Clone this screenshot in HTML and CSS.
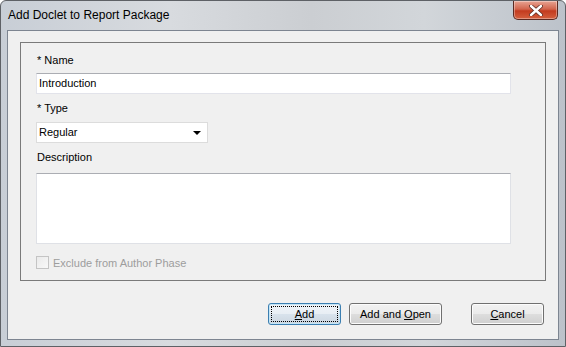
FILE: index.html
```html
<!DOCTYPE html>
<html lang="en">
<head>
    <meta charset="UTF-8">
    <title>Add Doclet to Report Package</title>
    <link rel="stylesheet" href="styles.css">
</head>
<body>

    <!-- Dialog window -->
    <div class="window">
        <div class="titlebar">
            <span class="title">Add Doclet to Report Package</span>
            <div class="close-btn">
                <svg width="14" height="11" viewBox="0 0 14 11">
                    <path d="M2 1 L12 10 M12 1 L2 10" stroke="#5a2a20" stroke-width="4" stroke-linecap="round"/>
                    <path d="M2 1 L12 10 M12 1 L2 10" stroke="#ffffff" stroke-width="2.4" stroke-linecap="round"/>
                </svg>
            </div>
        </div>

        <div class="client">
            <!-- Group box -->
            <div class="group">
                <label class="field-label">* Name</label>
                <div class="textbox name-box">Introduction</div>

                <label class="field-label">* Type</label>
                <div class="textbox type-box">
                    <span>Regular</span>
                    <span class="arrow"></span>
                </div>

                <label class="field-label desc-label">Description</label>
                <div class="textbox desc-box"></div>

                <div class="check-row">
                    <span class="checkbox"></span>
                    <span class="check-label">Exclude from Author Phase</span>
                </div>
            </div>

            <!-- Buttons -->
            <div class="buttons">
                <div class="btn btn-add focused"><span class="focus-rect"><span><u>A</u>dd</span></span></div>
                <div class="btn btn-open"><span>Add and <u>O</u>pen</span></div>
                <div class="btn btn-cancel"><span><u>C</u>ancel</span></div>
            </div>
        </div>
    </div>

</body>
</html>
```

FILE: styles.css
```css
/* Page */
body {
    margin: 0;
    padding: 0;
    font-family: 'Liberation Sans', Arial, sans-serif;
    font-size: 11px;
    color: #000;
    background-color: #ffffff;
}

/* Window frame */
.window {
    width: 566px;
    height: 347px;
    box-sizing: border-box;
    border: 1px solid #5e6166;
    border-radius: 6px 6px 0 0;
    background: linear-gradient(90deg, #c8ced6 0%, #d8dbdf 30%, #cbced2 55%, #d2d6da 75%, #bcc2ca 100%);
    display: flex;
    flex-direction: column;
}

/* Title bar */
.titlebar {
    height: 29px;
    display: flex;
    align-items: flex-start;
}

.titlebar .title {
    padding: 7px 0 0 7px;
    font-size: 12px;
    color: #000;
}

.close-btn {
    margin-left: auto;
    margin-right: 7px;
    width: 45px;
    height: 19px;
    box-sizing: border-box;
    border: 1px solid #5b2a22;
    border-top: none;
    border-radius: 0 0 5px 5px;
    background: linear-gradient(180deg, #e8a493 0%, #d2654d 45%, #c33b1f 55%, #d4603e 100%);
    display: flex;
    align-items: center;
    justify-content: center;
    box-shadow: inset 0 0 0 1px rgba(255, 255, 255, 0.35);
}

/* Client area */
.client {
    flex: 1;
    margin: 0 6px 6px 6px;
    border: 1px solid #7d8591;
    background-color: #f0f0f0;
    display: flex;
    flex-direction: column;
}

/* Group box */
.group {
    margin: 11px 12px 0 12px;
    height: 239px;
    border: 1px solid #7a7a7a;
    box-sizing: border-box;
    padding: 9px 0 0 15px;
    display: flex;
    flex-direction: column;
    align-items: flex-start;
}

.field-label {
    height: 16px;
    line-height: 16px;
    padding-left: 1px;
    margin-bottom: 5px;
}

.desc-label {
    margin-bottom: 8px;
}

.textbox {
    box-sizing: border-box;
    background-color: #ffffff;
    border: 1px solid #e2e3ea;
    border-top-color: #abadb3;
    line-height: 19px;
    padding: 0 2px;
}

.name-box {
    width: 475px;
    height: 21px;
    margin-bottom: 6px;
}

.type-box {
    width: 172px;
    height: 21px;
    margin-top: 1px;
    margin-bottom: 6px;
    border-color: #dcdcdc;
    display: flex;
    align-items: center;
    justify-content: space-between;
    padding-right: 6px;
}

.type-box .arrow {
    width: 0;
    height: 0;
    border-left: 4px solid transparent;
    border-right: 4px solid transparent;
    border-top: 4px solid #000;
}

.desc-box {
    width: 475px;
    height: 71px;
    margin-bottom: 12px;
    border-color: #dfe1e6;
    border-top-color: #abadb3;
}

/* Checkbox */
.check-row {
    display: flex;
    align-items: center;
}

.checkbox {
    width: 13px;
    height: 13px;
    box-sizing: border-box;
    border: 1px solid #c4c4c4;
    background: linear-gradient(135deg, #eaeaea, #f8f8f8);
    margin-right: 4px;
}

.check-label {
    color: #9d9d9d;
}

/* Buttons */
.buttons {
    display: flex;
    justify-content: flex-end;
    padding: 22px 14px 0 0;
}

.btn {
    height: 22px;
    box-sizing: border-box;
    border: 1px solid #707070;
    border-radius: 3px;
    background: linear-gradient(180deg, #f2f2f2 0%, #ebebeb 48%, #dddddd 52%, #cfcfcf 100%);
    display: flex;
    align-items: center;
    justify-content: center;
    box-shadow: inset 0 0 0 1px #fcfcfc;
}

.btn-add {
    width: 73px;
    margin-right: 8px;
}

.btn-open {
    width: 93px;
    margin-right: 29px;
}

.btn-cancel {
    width: 73px;
}

.btn.focused {
    border-color: #3c7fb1;
    box-shadow: inset 0 0 0 1px #c4e5f6;
    background: linear-gradient(180deg, #f0f4f8 0%, #e8eef4 48%, #d8e2ec 52%, #ccd6e0 100%);
}

.focus-rect {
    width: 65px;
    height: 14px;
    border: 1px dotted #000;
    display: flex;
    align-items: center;
    justify-content: center;
}
```
